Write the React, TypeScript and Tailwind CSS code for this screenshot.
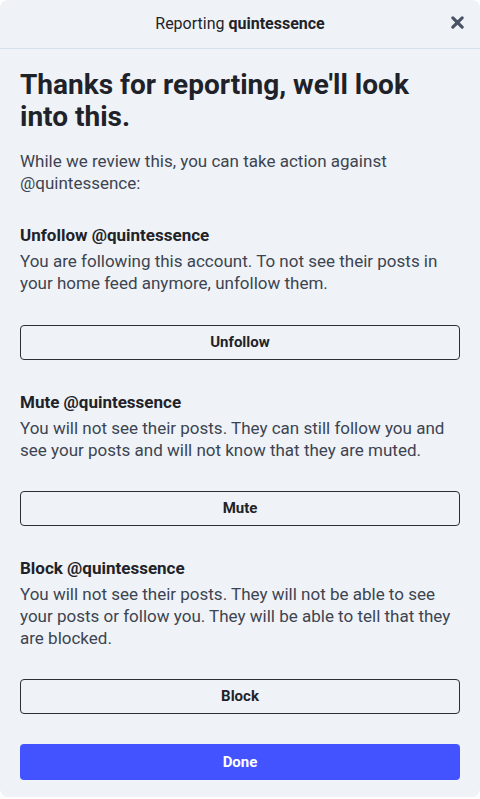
import React from 'react';

const sections = [
    {
        title: "Unfollow @quintessence",
        desc: "You are following this account. To not see their posts in your home feed anymore, unfollow them.",
        action: "Unfollow",
    },
    {
        title: "Mute @quintessence",
        desc: "You will not see their posts. They can still follow you and see your posts and will not know that they are muted.",
        action: "Mute",
    },
    {
        title: "Block @quintessence",
        desc: "You will not see their posts. They will not be able to see your posts or follow you. They will be able to tell that they are blocked.",
        action: "Block",
    },
];

export default function App() {
    return (
        <div className="w-[480px] h-[799px] bg-white font-['Roboto',sans-serif]">
            <div className="h-[797px] bg-[#eff3f7] rounded-[8px] flex flex-col">
                {/* Header */}
                <div className="relative h-[49px] border-b border-[#d5e0ea] flex items-center justify-center shrink-0">
                    <span className="text-[16px] text-[#1f2329]">
                        Reporting <span className="font-bold">quintessence</span>
                    </span>
                    <button className="absolute right-[16px] top-[16px] text-[#4a5363]">
                        <svg width="13" height="13" viewBox="0 0 14 14">
                            <path d="M2 2 L12 12 M12 2 L2 12" stroke="currentColor" strokeWidth="3.4" strokeLinecap="round" />
                        </svg>
                    </button>
                </div>

                <div className="px-5 pt-[20px]">
                    <h1 className="max-w-[420px] text-[28px] leading-[32px] font-bold text-[#1f2329]">
                        Thanks for reporting, we'll look into this.
                    </h1>
                    <p className="mt-[17px] text-[17px] leading-[22px] text-[#3d4451]">
                        While we review this, you can take action against @quintessence:
                    </p>

                    {sections.map((s, i) => (
                        <div key={i} className={i === 0 ? "mt-[29px]" : "mt-[30px]"}>
                            <h2 className="text-[17px] leading-[24px] font-bold text-[#1f2329]">{s.title}</h2>
                            <p className="mt-[3px] text-[17px] leading-[22px] text-[#3d4451]">{s.desc}</p>
                            <button className={`${i === 0 ? "mt-[31px]" : "mt-[30px]"} w-full h-[35px] border border-[#2a2f38] rounded-[4px] text-[15px] font-bold text-[#1f2329]`}>
                                {s.action}
                            </button>
                        </div>
                    ))}

                    <button className="mt-[30px] w-full h-[36px] bg-[#4353ff] rounded-[4px] text-[15px] font-bold text-white">
                        Done
                    </button>
                </div>
            </div>
        </div>
    );
}
